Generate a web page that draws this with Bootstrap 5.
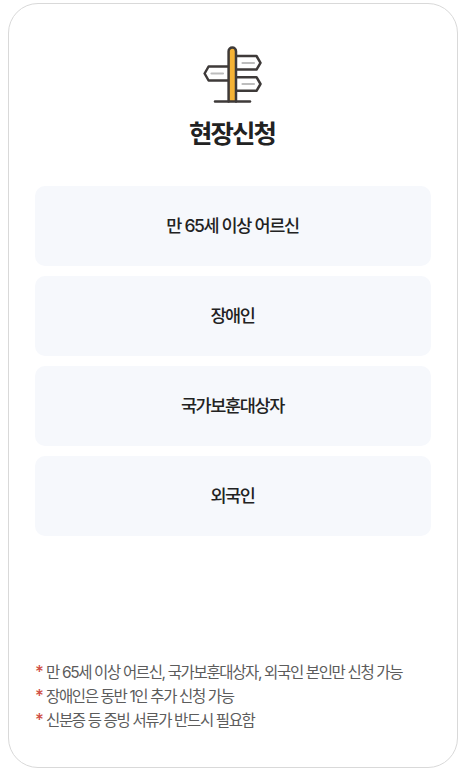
<!DOCTYPE html>
<html lang="ko">
<head>
<meta charset="utf-8">
<meta name="viewport" content="width=device-width, initial-scale=1">
<title>현장신청</title>
<link href="https://cdn.jsdelivr.net/npm/bootstrap@5.3.0/dist/css/bootstrap.min.css" rel="stylesheet">
<style>
body{font-family:Inter,"Noto Sans CJK KR",sans-serif;color:#222;background:#fff;overflow:hidden}
.apply-card{width:450px;height:765px;margin:3px 0 0 8px;padding:41px 26px 0;border:1px solid #d9d9d9;border-radius:30px}
.apply-icon{width:60px;height:60px}
.apply-title{font-size:25.5px;line-height:36px;letter-spacing:-1.9px;margin:11px 2px 34px 0}
.targets{gap:10px}
.target{height:80px;padding-right:1px;border-radius:10px;background:#f6f8fc;font-size:17.5px;letter-spacing:-1.35px;font-weight:500}
.notes{margin-top:125px;font-size:15.5px;line-height:24px;letter-spacing:-1.36px;color:#5c5c5c;white-space:nowrap}
.notes li{padding-left:11px;position:relative}
.notes li::before{content:"*";position:absolute;left:0;top:-1px;color:#d05045;font-family:Inter,sans-serif;font-size:17px;font-weight:500}
</style>
<script src="https://cdn.jsdelivr.net/npm/bootstrap@5.3.0/dist/js/bootstrap.bundle.min.js"></script>
</head>
<body>
<main class="apply-card d-flex flex-column">
  <svg class="apply-icon mx-auto flex-shrink-0" viewBox="0 0 60 60" fill="none" stroke="#3e3a39" stroke-width="2.5" stroke-linecap="round" stroke-linejoin="round" aria-hidden="true">
    <path d="M33 11h20.500l4 6.800-4 6.800H33M33 32.200h20.500l4 6.800-4 6.800H33M25 21.500H5.600l-4 7 4 7H25" fill="#fff"/>
    <path d="M39.500 18h11.500M39.500 39h11.500M8.500 28.500h11.500" stroke="#bdbdbd" stroke-width="2.200"/>
    <path d="M25.600 56.500V6.200a3.700 3.700 0 0 1 7.400 0v50.300" fill="#f5b335"/>
    <path d="M12 56.500h35"/>
  </svg>
  <h1 class="apply-title text-center fw-bold">현장신청</h1>
  <div class="targets d-grid">
    <div class="target d-flex align-items-center justify-content-center">만 65세 이상 어르신</div>
    <div class="target d-flex align-items-center justify-content-center">장애인</div>
    <div class="target d-flex align-items-center justify-content-center">국가보훈대상자</div>
    <div class="target d-flex align-items-center justify-content-center">외국인</div>
  </div>
  <ul class="notes list-unstyled mb-0">
    <li>만 65세 이상 어르신, 국가보훈대상자, 외국인 본인만 신청 가능</li>
    <li>장애인은 동반 1인 추가 신청 가능</li>
    <li>신분증 등 증빙 서류가 반드시 필요함</li>
  </ul>
</main>
</body>
</html>
